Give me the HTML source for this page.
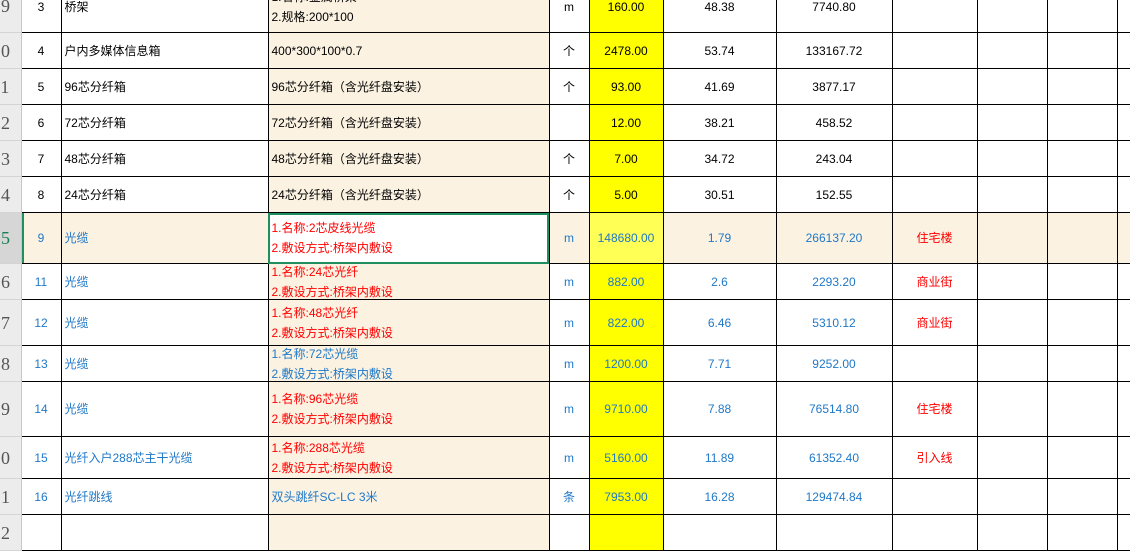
<!DOCTYPE html>
<html><head><meta charset="utf-8"><style>
body{margin:0;width:1130px;height:521px;overflow:hidden;background:#fff;font-family:"Liberation Sans","Noto Sans CJK SC",sans-serif;font-size:12px;position:relative}
table{position:absolute;left:0;top:-20px;border-collapse:collapse;table-layout:fixed;width:1157px}
td{border:1px solid #000;padding:0;white-space:nowrap;line-height:16px;color:#000;box-sizing:border-box}
td.h{background:#ececec;border:none;border-bottom:1px solid #d4d4d4;border-right:1px solid #c8c8c8;text-align:left;font-family:"Liberation Serif",serif;font-size:18px;color:#555;overflow:hidden}
td.h span{display:inline-block;position:relative;left:-8px}
td.a{text-align:center;border-left:none}
td.b{padding-left:3px}
td.c{background:#fbf2e2;padding-left:3px}
td.d{text-align:center}
td.e{background:#ffff00;text-align:center;border-left:1px solid #c0c0c0}
td.f,td.g,td.hh{text-align:center}
.two{height:0;position:relative;top:-20px;line-height:20px}
tr.bl td{color:#1f78c8}
tr.bl td.c{color:#ff0000}
tr.bl td.hh{color:#ff0000}
tr.bl td.h{color:#555}
tr.sel td{background:#fbf2e2}
tr.sel td.e{background:#ffff55}
tr.sel td.h{background:#d6d6d6;color:#1a7f55}
tr.sel td.a{box-shadow:inset 2px 0 0 #1f8f5f}
tr.sel td.c{background:#fff;outline:2px solid #1f8f5f;outline-offset:-2px}
</style></head><body>
<table>
<colgroup><col style="width:21px"><col style="width:40px"><col style="width:207px"><col style="width:281px"><col style="width:40px"><col style="width:74px"><col style="width:113px"><col style="width:116px"><col style="width:85px"><col style="width:70px"><col style="width:70px"><col style="width:40px"></colgroup>
<tr style="height:52px"><td class="h"><span>19</span></td><td class="a">3</td><td class="b">桥架</td><td class="c"><div class="two">1.名称:金属桥架<br>2.规格:200*100</div></td><td class="d">m</td><td class="e">160.00</td><td class="f">48.38</td><td class="g">7740.80</td><td class="hh"></td><td></td><td></td><td></td></tr>
<tr style="height:36px"><td class="h"><span>10</span></td><td class="a">4</td><td class="b">户内多媒体信息箱</td><td class="c">400*300*100*0.7</td><td class="d">个</td><td class="e">2478.00</td><td class="f">53.74</td><td class="g">133167.72</td><td class="hh"></td><td></td><td></td><td></td></tr>
<tr style="height:36px"><td class="h"><span>11</span></td><td class="a">5</td><td class="b">96芯分纤箱</td><td class="c">96芯分纤箱（含光纤盘安装）</td><td class="d">个</td><td class="e">93.00</td><td class="f">41.69</td><td class="g">3877.17</td><td class="hh"></td><td></td><td></td><td></td></tr>
<tr style="height:36px"><td class="h"><span>12</span></td><td class="a">6</td><td class="b">72芯分纤箱</td><td class="c">72芯分纤箱（含光纤盘安装）</td><td class="d"></td><td class="e">12.00</td><td class="f">38.21</td><td class="g">458.52</td><td class="hh"></td><td></td><td></td><td></td></tr>
<tr style="height:36px"><td class="h"><span>13</span></td><td class="a">7</td><td class="b">48芯分纤箱</td><td class="c">48芯分纤箱（含光纤盘安装）</td><td class="d">个</td><td class="e">7.00</td><td class="f">34.72</td><td class="g">243.04</td><td class="hh"></td><td></td><td></td><td></td></tr>
<tr style="height:36px"><td class="h"><span>14</span></td><td class="a">8</td><td class="b">24芯分纤箱</td><td class="c">24芯分纤箱（含光纤盘安装）</td><td class="d">个</td><td class="e">5.00</td><td class="f">30.51</td><td class="g">152.55</td><td class="hh"></td><td></td><td></td><td></td></tr>
<tr class="bl sel" style="height:51px"><td class="h"><span>15</span></td><td class="a">9</td><td class="b">光缆</td><td class="c"><div class="two">1.名称:2芯皮线光缆<br>2.敷设方式:桥架内敷设</div></td><td class="d">m</td><td class="e">148680.00</td><td class="f">1.79</td><td class="g">266137.20</td><td class="hh">住宅楼</td><td></td><td></td><td></td></tr>
<tr class="bl" style="height:36px"><td class="h"><span>16</span></td><td class="a">11</td><td class="b">光缆</td><td class="c"><div class="two">1.名称:24芯光纤<br>2.敷设方式:桥架内敷设</div></td><td class="d">m</td><td class="e">882.00</td><td class="f">2.6</td><td class="g">2293.20</td><td class="hh">商业街</td><td></td><td></td><td></td></tr>
<tr class="bl" style="height:46px"><td class="h"><span>17</span></td><td class="a">12</td><td class="b">光缆</td><td class="c"><div class="two">1.名称:48芯光纤<br>2.敷设方式:桥架内敷设</div></td><td class="d">m</td><td class="e">822.00</td><td class="f">6.46</td><td class="g">5310.12</td><td class="hh">商业街</td><td></td><td></td><td></td></tr>
<tr class="bl" style="height:36px"><td class="h"><span>18</span></td><td class="a">13</td><td class="b">光缆</td><td class="c" style="color:#1f78c8"><div class="two">1.名称:72芯光缆<br>2.敷设方式:桥架内敷设</div></td><td class="d">m</td><td class="e">1200.00</td><td class="f">7.71</td><td class="g">9252.00</td><td class="hh"></td><td></td><td></td><td></td></tr>
<tr class="bl" style="height:55px"><td class="h"><span>19</span></td><td class="a">14</td><td class="b">光缆</td><td class="c"><div class="two">1.名称:96芯光缆<br>2.敷设方式:桥架内敷设</div></td><td class="d">m</td><td class="e">9710.00</td><td class="f">7.88</td><td class="g">76514.80</td><td class="hh">住宅楼</td><td></td><td></td><td></td></tr>
<tr class="bl" style="height:42px"><td class="h"><span>20</span></td><td class="a">15</td><td class="b">光纤入户288芯主干光缆</td><td class="c"><div class="two">1.名称:288芯光缆<br>2.敷设方式:桥架内敷设</div></td><td class="d">m</td><td class="e">5160.00</td><td class="f">11.89</td><td class="g">61352.40</td><td class="hh">引入线</td><td></td><td></td><td></td></tr>
<tr class="bl" style="height:36px"><td class="h"><span>21</span></td><td class="a">16</td><td class="b">光纤跳线</td><td class="c" style="color:#1f78c8">双头跳纤SC-LC 3米</td><td class="d">条</td><td class="e">7953.00</td><td class="f">16.28</td><td class="g">129474.84</td><td class="hh"></td><td></td><td></td><td></td></tr>
<tr style="height:36px"><td class="h"><span>22</span></td><td class="a"></td><td class="b"></td><td class="c"></td><td class="d"></td><td class="e"></td><td class="f"></td><td class="g"></td><td class="hh"></td><td></td><td></td><td></td></tr>
</table>
</body></html>
